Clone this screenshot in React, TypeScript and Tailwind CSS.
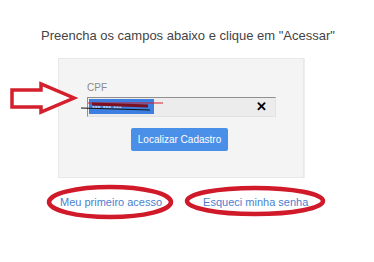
export default function App() {
  return (
    <div className="relative w-[374px] h-[262px] bg-white overflow-hidden font-['Liberation_Sans',Arial,sans-serif]">
      <div className="pt-[26px] pl-[41px] text-[13px] text-[#444]">
        Preencha os campos abaixo e clique em "Acessar"
      </div>

      <div className="ml-[58px] mt-[12px] w-[246px] h-[120px] bg-[#f4f4f4] border border-[#e8e8e8] shadow-[1px_0_0_#eeeeee]">
        <div className="pl-[28px] pt-[24px]">
          <div className="text-[10px] text-[#8a8a8a] leading-none">CPF</div>
          <div className="mt-[4px] w-[189px] h-[20px] bg-[#ececec] border-t border-l border-[#8f8f8f] border-b border-r border-b-[#e2e2e2] border-r-[#e2e2e2] flex items-center pl-[1px] pr-[8px]">
            <span className="h-[15px] w-[65px] bg-[#3d7fe0] text-white text-[8px] leading-[15px] pl-[3px]">
              <span className="opacity-60">••• ••• •••</span>
            </span>
            <span className="ml-auto text-[13px] font-bold text-black leading-none">✕</span>
          </div>
          <div className="mt-[11px] ml-[44px] w-[97px] h-[23px] bg-[#4a8fe8] rounded-[2px] flex items-center justify-center text-white text-[10px]">
            Localizar Cadastro
          </div>
        </div>
      </div>

      <div className="flex mt-[16px] text-[11px] leading-[16px] text-[#4a7fd0]">
        <span className="ml-[60px]">Meu primeiro acesso</span>
        <span className="ml-[41px]">Esqueci minha senha</span>
      </div>

      {/* annotations */}
      <svg className="absolute inset-0 pointer-events-none" width="374" height="262">
        <path
          d="M12 90 L41 90 L41 84 L74 98 L41 112 L41 107 L12 107 Z"
          fill="white"
          stroke="#d4202c"
          strokeWidth="3.5"
          strokeLinejoin="miter"
        />
        <line x1="88" y1="103" x2="163" y2="103" stroke="#d4202c" strokeWidth="1" />
        <path d="M92 104 L148 106" stroke="#7a1020" strokeWidth="3" />
        <line x1="81" y1="108" x2="150" y2="110" stroke="#111" strokeWidth="1" />
        <ellipse cx="110" cy="202" rx="61" ry="15" fill="none" stroke="#d01a2a" strokeWidth="4.5" />
        <ellipse cx="255" cy="201" rx="68" ry="13" fill="none" stroke="#d01a2a" strokeWidth="4.5" />
      </svg>
    </div>
  )
}
